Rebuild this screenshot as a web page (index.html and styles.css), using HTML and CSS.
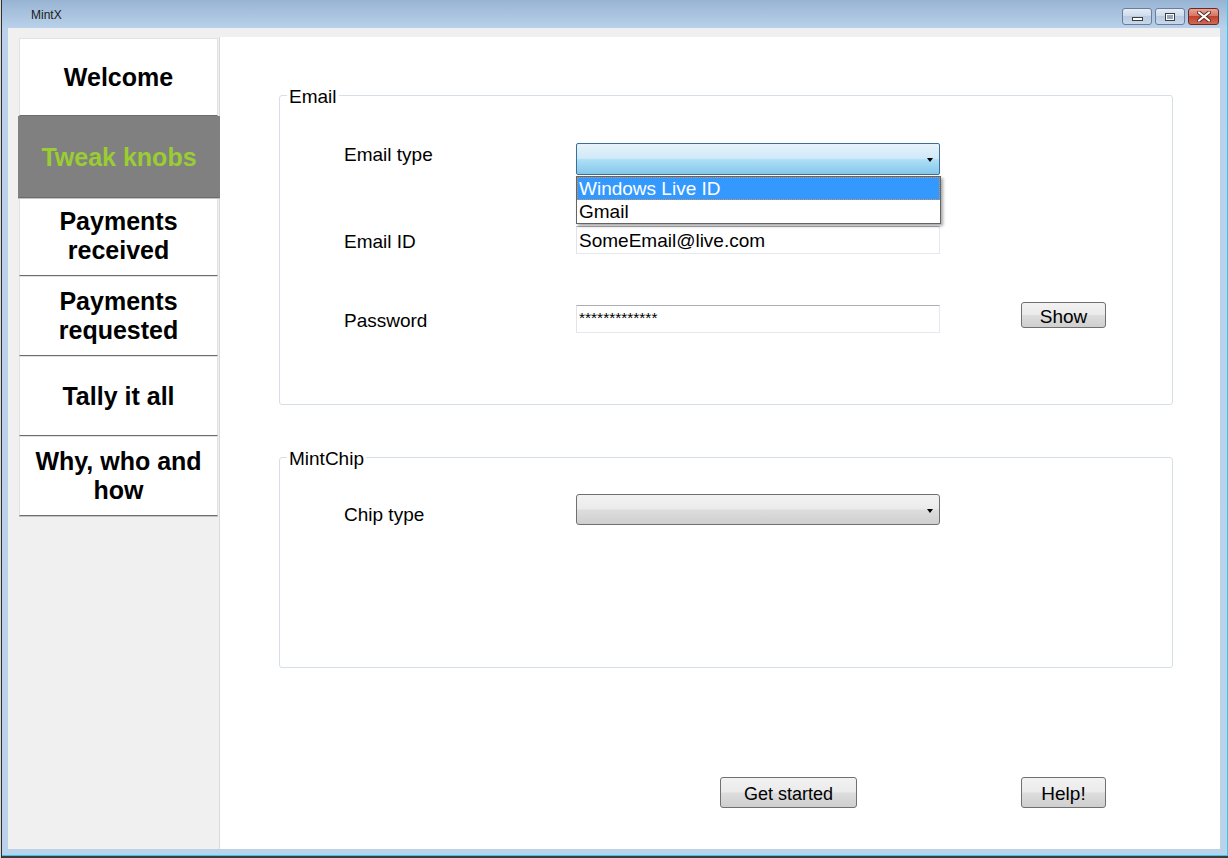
FILE: index.html
```html
<!DOCTYPE html>
<html lang="en">
<head>
    <meta charset="UTF-8">
    <title>MintX</title>
    <link rel="stylesheet" href="styles.css">
</head>
<body>
    <div class="window">
        <div class="titlebar">
            <span class="title">MintX</span>
            <div class="controls">
                <span class="ctl min"><i></i></span>
                <span class="ctl max"><i></i></span>
                <span class="ctl close">
                    <svg width="14" height="11" viewBox="0 0 14 11">
                        <path d="M2 1.5 L12 9.5 M12 1.5 L2 9.5" stroke="#5a2a22" stroke-width="4" stroke-linecap="round"/>
                        <path d="M2 1.5 L12 9.5 M12 1.5 L2 9.5" stroke="#fff" stroke-width="2.2" stroke-linecap="round"/>
                    </svg>
                </span>
            </div>
        </div>
        <div class="client">
            <nav class="sidebar">
                <button class="nav first">Welcome</button>
                <button class="nav active">Tweak knobs</button>
                <button class="nav">Payments<br>received</button>
                <button class="nav">Payments<br>requested</button>
                <button class="nav">Tally it all</button>
                <button class="nav">Why, who and<br>how</button>
            </nav>
            <main class="panel">
                <fieldset class="group">
                    <legend>Email</legend>
                    <div class="group-body email-body">
                        <div class="row r-type">
                            <label>Email type</label>
                            <div class="combo open">
                                <ul class="dropdown">
                                    <li class="selected">Windows Live ID</li>
                                    <li>Gmail</li>
                                </ul>
                            </div>
                        </div>
                        <div class="row r-id">
                            <label>Email ID</label>
                            <input class="textbox" type="text" value="SomeEmail@live.com">
                        </div>
                        <div class="row r-pass">
                            <label>Password</label>
                            <input class="textbox pass" type="text" value="*************">
                            <button class="btn show">Show</button>
                        </div>
                    </div>
                </fieldset>
                <fieldset class="group chip">
                    <legend>MintChip</legend>
                    <div class="group-body chip-body">
                        <div class="row r-chip">
                            <label>Chip type</label>
                            <div class="combo"></div>
                        </div>
                    </div>
                </fieldset>
                <div class="actions">
                    <button class="btn start">Get started</button>
                    <button class="btn help">Help!</button>
                </div>
            </main>
        </div>
    </div>
</body>
</html>
```

FILE: styles.css
```css
* {
    box-sizing: border-box;
}
body {
    margin: 0;
    font-family: "Liberation Sans", Arial, sans-serif;
    background: #fff;
}
.window {
    width: 1228px;
    height: 858px;
    display: flex;
    flex-direction: column;
    padding: 0 8px 9px 8px;
    background: linear-gradient(#98b4d3 0, #b9d1ea 28px, #bad2ea);
    box-shadow: inset 1px 0 0 #d8d8d8, inset 2px 0 0 #2f2f2f,
        inset 0 -2px 0 #3c3c3c, inset 0 -3px 0 #3ac6e6,
        inset -1px 0 0 #3ac6e6;
}
.titlebar {
    height: 28px;
    margin: 0 -8px;
    display: flex;
    justify-content: space-between;
    align-items: flex-start;
}
.title {
    font-size: 12px;
    color: #1b1b1b;
    padding: 8px 0 0 31px;
}
.controls {
    display: flex;
    gap: 3px;
    margin: 8px 9px 0 0;
}
.ctl {
    width: 30px;
    height: 17px;
    border: 1px solid #6c7d99;
    border-radius: 3px;
    background: linear-gradient(#e4edf7, #cbd9ea 50%, #b9cbe1 50%, #c8d8ec);
    display: flex;
    justify-content: center;
    align-items: center;
}
.ctl.min {
    align-items: flex-end;
    padding-bottom: 3px;
}
.ctl.min i {
    width: 11px;
    height: 4px;
    background: #fff;
    border: 1px solid #3d3d3d;
}
.ctl.max i {
    width: 10px;
    height: 8px;
    background: #fff;
    border: 1px solid #3d3d3d;
    box-shadow: inset 0 0 0 1px #fff, inset 0 0 0 3px #9aa6b5;
}
.ctl.close {
    width: 31px;
    border-color: #6b2a21;
    background: linear-gradient(#e9a496, #d4705e 50%, #c1412d 50%, #d06a54);
}
.client {
    flex: 1;
    display: flex;
    background: #f0f0f0;
}
.sidebar {
    width: 211px;
    padding: 10px 0 0 11px;
    display: flex;
    flex-direction: column;
}
.nav {
    width: 199px;
    height: 80px;
    flex-shrink: 0;
    padding: 0;
    background: #fff;
    border: 1px solid #e2e2e2;
    border-bottom: 1px solid #6c6c6c;
    box-shadow: 0 1px 0 #c4c4c4;
    font-family: "Liberation Sans", Arial, sans-serif;
    font-size: 25px;
    font-weight: bold;
    line-height: 29px;
    color: #000;
    text-align: center;
}
.nav.first {
    height: 78px;
}
.nav.active {
    position: relative;
    z-index: 1;
    height: 82px;
    width: 202px;
    margin: 0 0 -2px -1px;
    background: #808080;
    border-color: #808080 #808080 #6c6c6c;
    color: #9acd32;
}
.panel {
    flex: 1;
    margin-top: 9px;
    background: #fff;
    border-left: 1px solid #dadada;
    padding: 46px 47px 0 59px;
}
.group {
    margin: 0;
    padding: 0;
    min-width: 0;
    border: 1px solid #d5dfe5;
    border-radius: 3px;
}
.group legend {
    margin-left: 7px;
    padding: 4px 2px 0;
    font-size: 19px;
    line-height: 20px;
    color: #000;
}
.group.chip {
    margin-top: 40px;
}
.group-body {
    padding-left: 64px;
}
.email-body {
    padding-top: 36px;
    padding-bottom: 71px;
}
.chip-body {
    padding-top: 25px;
    padding-bottom: 142px;
}
.row {
    display: flex;
    align-items: center;
}
.row label {
    width: 232px;
    padding-top: 3px;
    font-size: 19px;
    color: #000;
}
.r-type {
    height: 32px;
}
.r-type label {
    padding-top: 5px;
    margin-bottom: 13px;
}
.r-id {
    height: 28px;
    margin-top: 51px;
}
.r-pass {
    height: 31px;
    margin-top: 48px;
}
.r-pass label {
    padding-top: 7px;
}
.r-pass .textbox {
    align-self: flex-end;
}
.r-pass .btn {
    align-self: flex-start;
}
.r-chip {
    height: 31px;
}
.r-chip label {
    padding-top: 0;
    margin-top: 10px;
}
.combo {
    position: relative;
    width: 364px;
    height: 31px;
    border: 1px solid #707070;
    border-radius: 3px;
    background: linear-gradient(#f2f2f2, #ebebeb 48%, #dddddd 52%, #cfcfcf);
}
.combo::after {
    content: "";
    position: absolute;
    right: 6px;
    top: 50%;
    margin-top: -1px;
    border-left: 3.5px solid transparent;
    border-right: 3.5px solid transparent;
    border-top: 4px solid #000;
}
.combo.open {
    height: 32px;
    border-color: #3c6f98;
    border-radius: 2px;
    background: linear-gradient(#e6f3fb, #d0e9f8 48%, #ade0f7 52%, #86c6ea);
}
.dropdown {
    position: absolute;
    top: 32px;
    left: -1px;
    width: 365px;
    margin: 0;
    padding: 0;
    list-style: none;
    background: #fff;
    border: 1px solid #646464;
    box-shadow: 2px 2px 3px rgba(0, 0, 0, 0.35);
    z-index: 2;
}
.dropdown li {
    height: 23px;
    line-height: 24px;
    padding-left: 2px;
    font-size: 19px;
    color: #000;
}
.dropdown li.selected {
    background: #3399ff;
    color: #fff;
    outline: 1px dotted #d99050;
    outline-offset: -1px;
}
.textbox {
    width: 364px;
    height: 28px;
    padding: 2px 2px 0;
    border: 1px solid;
    border-color: #abadb3 #e3e9ef #e3e9ef #e2e3ea;
    font-family: "Liberation Sans", Arial, sans-serif;
    font-size: 19px;
    color: #000;
    background: #fff;
}
.textbox.pass {
    font-size: 15.5px;
    padding: 0 2px 3px;
}
.btn {
    height: 31px;
    padding: 3px 0 0;
    border: 1px solid #707070;
    border-radius: 3px;
    background: linear-gradient(#f2f2f2, #ebebeb 48%, #dddddd 52%, #cfcfcf);
    font-family: "Liberation Sans", Arial, sans-serif;
    font-size: 19px;
    color: #000;
}
.btn.show {
    width: 85px;
    height: 26px;
    margin-left: 81px;
}
.actions {
    display: flex;
    margin-top: 109px;
    padding-left: 441px;
}
.btn.start {
    width: 137px;
    font-size: 18px;
}
.btn.help {
    width: 85px;
    margin-left: 164px;
}
```
